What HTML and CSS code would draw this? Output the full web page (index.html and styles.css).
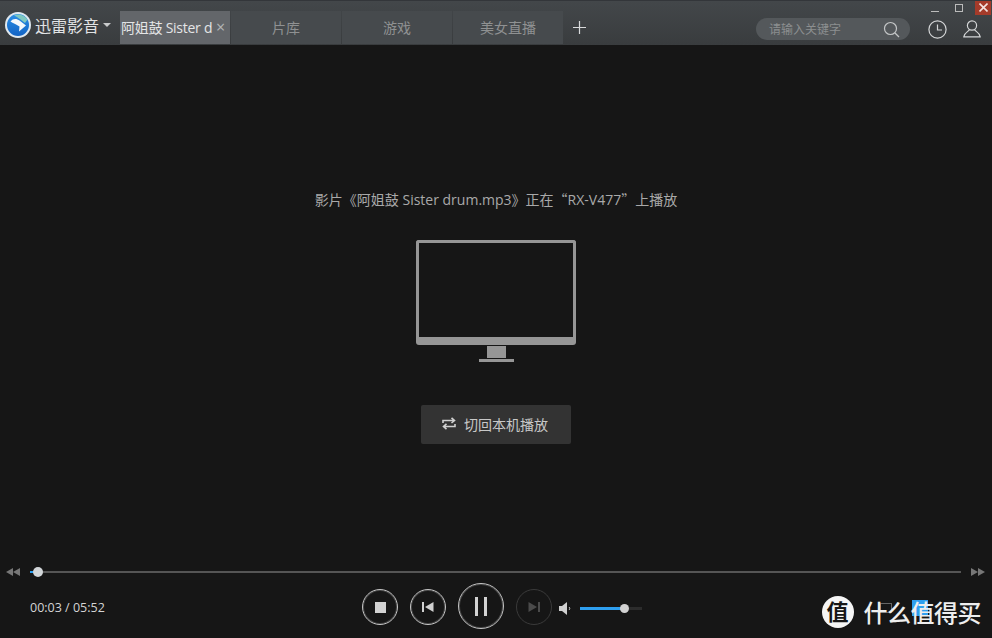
FILE: index.html
```html
<!DOCTYPE html>
<html lang="zh-CN">
<head>
  <meta charset="UTF-8" />
  <title>迅雷影音</title>
  <link rel="stylesheet" href="styles.css">
</head>
<body>

<div class="app">
  <header class="topbar">
    <div class="brand">
      <svg class="logo" width="26" height="26" viewBox="0 0 26 26">
        <defs>
          <linearGradient id="logoBlue" x1="0" y1="0" x2="0" y2="1">
            <stop offset="0" stop-color="#2b8fe6"/>
            <stop offset="1" stop-color="#1263c4"/>
          </linearGradient>
        </defs>
        <circle cx="13" cy="13" r="13" fill="#dfe8ef"/>
        <circle cx="13" cy="13" r="11" fill="url(#logoBlue)"/>
        <path d="M9 3.500C13 1.500 19 2.500 22.500 7.500L20 11L15.500 7.500C13.500 6 11 4.500 9 3.500Z" fill="#7fc8c0"/>
        <path d="M5.500 9.500C8 6 12 6.500 14.500 8.500L21 13.500L14 19.500L14.500 14.500C11 12.500 8 11 5.500 9.500Z" fill="#f4f8fb"/>
      </svg>
      <span class="brand-name">迅雷影音</span>
      <span class="caret"></span>
    </div>

    <nav class="tabs">
      <div class="tab tab-active"><span class="tab-title">阿姐鼓 Sister d</span><span class="tab-close">×</span></div>
      <div class="tab">片库</div>
      <div class="tab">游戏</div>
      <div class="tab">美女直播</div>
      <svg class="plus" width="13" height="13" viewBox="0 0 13 13"><path d="M6.500 0V13M0 6.500H13" stroke="#d8dadb" stroke-width="1.200"/></svg>
    </nav>

    <div class="top-right">
      <div class="search">
        <span class="search-text">请输入关键字</span>
        <svg width="17" height="17" viewBox="0 0 17 17" fill="none" stroke="#c4c6c7" stroke-width="1.200"><circle cx="7.500" cy="7.500" r="6"/><path d="M12 12L16 16"/></svg>
      </div>
      <svg class="top-icon" width="19" height="19" viewBox="0 0 19 19" fill="none" stroke="#d4d6d7" stroke-width="1.200"><circle cx="9.500" cy="9.500" r="8.600"/><path d="M9.500 4.500V10H14"/></svg>
      <svg class="top-icon" width="18" height="18" viewBox="0 0 18 18" fill="none" stroke="#d4d6d7" stroke-width="1.200"><circle cx="9" cy="5.500" r="4.600"/><path d="M6.500 9.500C6 11.500 1 12.500 .8 16.800H17.200C17 12.500 12 11.500 11.500 9.500"/></svg>
    </div>

    <div class="win-buttons">
      <svg width="9" height="9" viewBox="0 0 9 9"><path d="M0 8.500H8" stroke="#bbb" fill="none"/></svg>
      <svg class="win-max" width="9" height="9" viewBox="0 0 9 9"><rect x=".5" y=".5" width="7" height="7" stroke="#bbb" fill="none"/></svg>
      <div class="win-close"><svg width="9" height="9" viewBox="0 0 9 9"><path d="M.5 .5L8.500 8.500M8.500 .5L.5 8.500" stroke="#f3e3df" stroke-width="1.600"/></svg></div>
    </div>
  </header>

  <main class="stage">
    <p class="status">影片《阿姐鼓 Sister drum.mp3》正在<span class="cjk">“</span>RX-V477<span class="cjk">”</span>上播放</p>
    <div class="monitor">
      <div class="screen"></div>
      <div class="chin"></div>
      <div class="neck"></div>
      <div class="foot"></div>
    </div>
    <button class="switch-btn">
      <svg width="14" height="13" viewBox="0 0 14 13" fill="none" stroke="#d0d0d0" stroke-width="1.600"><path d="M1 6V3.500H12M9.500 .8L12.500 3.500L9.500 6"/><path d="M13 7V9.500H2M4.500 6.800L1.500 9.500L4.500 12.200"/></svg>
      切回本机播放
    </button>
  </main>

  <footer class="controls">
    <div class="progress-row">
      <span class="skip skip-back"><i></i><i></i></span>
      <div class="track">
        <div class="track-played"></div>
        <div class="thumb"></div>
      </div>
      <span class="skip"><i></i><i></i></span>
    </div>
    <div class="control-row">
      <div class="time">00:03 / 05:52</div>
      <div class="buttons">
        <div class="round"><span class="stop"></span></div>
        <div class="round">
          <svg width="12" height="12" viewBox="0 0 12 12" fill="#d0d0d0"><rect x="0" y="1" width="2" height="10"/><path d="M11.500 1V11L3 6Z"/></svg>
        </div>
        <div class="round round-big"><span class="pause"></span><span class="pause"></span></div>
        <div class="round round-off">
          <svg width="12" height="12" viewBox="0 0 12 12" fill="#4b4b4b"><path d="M.5 1V11L9 6Z"/><rect x="10" y="1" width="2" height="10"/></svg>
        </div>
        <div class="volume">
          <svg width="13" height="13" viewBox="0 0 13 13" fill="#d0d0d0"><path d="M0 4H3L8 0V13L3 9H0Z"/><path d="M10 5C11 6 11 7 10 8" stroke="#d0d0d0" fill="none"/></svg>
          <div class="vol-track">
            <div class="vol-fill"></div>
            <div class="vol-thumb"></div>
          </div>
        </div>
      </div>
      <div class="watermark">
        <span class="wm-badge">值</span>
        <span class="wm-ghost-gray"></span>
        <span class="wm-ghost-blue"></span>
        <span class="wm-text">什么值得买</span>
      </div>
    </div>
  </footer>
</div>

</body>
</html>
```

FILE: styles.css
```css
* {
  box-sizing: border-box;
}

body {
  margin: 0;
  background: #161616;
  font-family: "Open Sans", "Noto Sans CJK SC", sans-serif;
  color: #c8c8c8;
}

.cjk {
  font-family: "Noto Sans CJK SC", sans-serif;
}

.app {
  width: 992px;
  height: 638px;
  display: flex;
  flex-direction: column;
  overflow: hidden;
}

.topbar {
  height: 45px;
  flex: none;
  display: flex;
  position: relative;
  padding-top: 10px;
  background: linear-gradient(#43474a, #393c3e);
  border-top: 1px solid #33363a;
}

.brand {
  width: 120px;
  flex: none;
  display: flex;
  align-items: center;
  height: 27px;
  padding-left: 5px;
}

.logo {
  flex: none;
}

.brand-name {
  margin: 1px 0 0 4px;
  font-size: 16px;
  color: #e2e4e5;
  white-space: nowrap;
}

.caret {
  margin: 1px 0 0 4px;
  border: 4px solid transparent;
  border-top-color: #c9cbcc;
  border-bottom: 0;
}

.tabs {
  display: flex;
  align-items: flex-start;
  flex: none;
}

.tab {
  width: 110px;
  height: 33px;
  margin-right: 1px;
  padding-bottom: 2px;
  background: #464a4d;
  color: #8f9192;
  font-size: 14px;
  display: flex;
  align-items: center;
  justify-content: center;
}

.tab-active {
  background: #63666a;
  color: #e4e5e6;
  justify-content: flex-start;
  padding-left: 1px;
}

.tab-title {
  width: 95px;
  letter-spacing: -.25px;
  white-space: nowrap;
}

.tab-close {
  font-size: 16px;
  line-height: 1;
  color: #b4b6b7;
}

.plus {
  margin: 10px 0 0 9px;
}

.top-right {
  margin-left: auto;
  display: flex;
  align-items: center;
  height: 36px;
  padding-right: 11px;
}

.search {
  width: 154px;
  height: 22px;
  border-radius: 11px;
  background: #54585b;
  display: flex;
  align-items: center;
  justify-content: space-between;
  padding: 0 10px 0 13px;
  margin-right: 18px;
}

.search-text {
  font-size: 12px;
  color: #8c8f90;
}

.top-icon {
  flex: none;
}

.top-icon + .top-icon {
  margin-left: 16px;
}

.win-buttons {
  position: absolute;
  top: 0;
  right: 1px;
  display: flex;
  align-items: flex-start;
  gap: 14px;
}

.win-buttons svg {
  display: block;
  margin-top: 2px;
}

.win-buttons .win-max {
  margin: 3px -1px 0 1px;
}

.win-close {
  width: 16px;
  height: 14px;
  margin-left: -2px;
  background: #a53b2a;
  display: flex;
  justify-content: center;
}

.stage {
  flex: 1;
  display: flex;
  flex-direction: column;
  align-items: center;
  padding-top: 143px;
}

.status {
  margin: 0;
  font-size: 14px;
  line-height: 22px;
  color: #a9a9a9;
  white-space: nowrap;
}

.monitor {
  margin-top: 29px;
  width: 160px;
  display: flex;
  flex-direction: column;
  align-items: center;
}

.screen {
  width: 160px;
  height: 97px;
  border: 3px solid #969696;
  border-bottom: 0;
  border-radius: 3px 3px 0 0;
}

.chin {
  width: 160px;
  height: 8px;
  background: #969696;
  border-radius: 0 0 3px 3px;
}

.neck {
  width: 19px;
  height: 12px;
  margin-top: 1px;
  background: #969696;
}

.foot {
  width: 35px;
  height: 3px;
  margin-top: 1px;
  background: #969696;
}

.switch-btn {
  margin-top: 43px;
  width: 150px;
  height: 39px;
  padding: 0 2px 2px 0;
  border: 0;
  border-radius: 2px;
  background: #333333;
  color: #c8c8c8;
  font-family: inherit;
  font-size: 14px;
  display: flex;
  align-items: center;
  justify-content: center;
  gap: 8px;
}

.controls {
  height: 83px;
  flex: none;
  padding-top: 11px;
}

.progress-row {
  height: 12px;
  display: flex;
  align-items: center;
  padding: 0 7px 0 6px;
}

.skip {
  width: 14px;
  flex: none;
  display: flex;
}

.skip i {
  border: 4px solid transparent;
  border-left: 7px solid #777777;
  border-right: 0;
}

.skip-back i {
  border-left: 0;
  border-right: 7px solid #777777;
}

.track {
  flex: 1;
  height: 2px;
  margin: 0 10px;
  background: #555555;
  position: relative;
}

.track-played {
  width: 8px;
  height: 2px;
  background: #2e9fef;
}

.thumb {
  position: absolute;
  left: 3px;
  top: -4px;
  width: 10px;
  height: 10px;
  border-radius: 50%;
  background: #d2d6d9;
}

.control-row {
  display: flex;
  align-items: center;
  height: 50px;
  margin-top: 3px;
  padding-left: 30px;
  position: relative;
}

.time {
  width: 332px;
  flex: none;
  padding-top: 3px;
  font-size: 12.500px;
  color: #d4d4d4;
}

.buttons {
  display: flex;
  align-items: center;
}

.round {
  width: 36px;
  height: 36px;
  margin: 2px 12px 0 0;
  border: 1px solid #c6c6c6;
  border-radius: 50%;
  box-shadow: inset 0 0 0 1px rgba(198, 198, 198, .25);
  display: flex;
  align-items: center;
  justify-content: center;
}

.round-big {
  width: 46px;
  height: 46px;
  margin-top: 0;
  gap: 6px;
}

.round-off {
  margin-right: 7px;
  border-color: #3a3a3a;
  box-shadow: none;
}

.stop {
  width: 11px;
  height: 11px;
  background: #d2d2d2;
}

.pause {
  width: 3px;
  height: 19px;
  background: #d2d2d2;
}

.volume {
  margin-top: 4px;
  display: flex;
  align-items: center;
  gap: 8px;
}

.vol-track {
  width: 62px;
  height: 3px;
  background: #2c2c2c;
  position: relative;
}

.vol-fill {
  width: 44px;
  height: 3px;
  background: #2e9fef;
}

.vol-thumb {
  position: absolute;
  left: 40px;
  top: -3px;
  width: 9px;
  height: 9px;
  border-radius: 50%;
  background: #d2d2d2;
}

.watermark {
  position: absolute;
  right: 11px;
  top: 13px;
  display: flex;
  align-items: center;
  gap: 10px;
}

.wm-badge {
  width: 32px;
  height: 32px;
  border-radius: 50%;
  background: #f5f5f5;
  color: #161616;
  font-size: 22px;
  font-weight: 700;
  line-height: 30px;
  text-align: center;
}

.wm-ghost-gray {
  position: absolute;
  left: 58px;
  top: 9px;
  width: 12px;
  height: 10px;
  border: 1px solid #666666;
}

.wm-ghost-blue {
  position: absolute;
  left: 90px;
  top: 6px;
  width: 16px;
  height: 16px;
  background: #2e9fef;
}

.wm-text {
  position: relative;
  font-size: 24px;
  font-weight: 500;
  color: #eeeeee;
  letter-spacing: -.5px;
}
```
